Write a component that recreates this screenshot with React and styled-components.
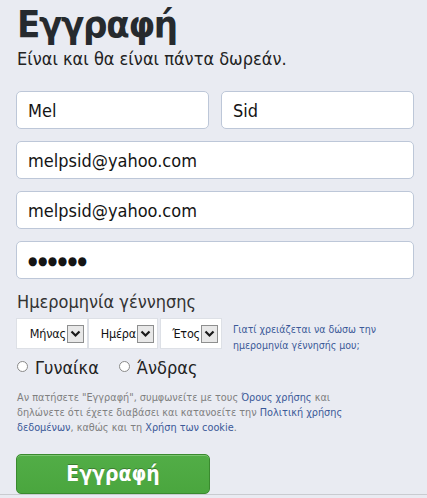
import React from 'react'
import styled, { createGlobalStyle } from 'styled-components'

const GlobalStyle = createGlobalStyle`
    html, body {
        margin: 0;
        padding: 0;
        background: #e9ebf2;
    }
    body {
        font-family: "DejaVu Sans", Verdana, sans-serif;
        color: #333;
    }
`

const Page = styled.div`
    width: 427px;
    height: 495px;
    box-sizing: border-box;
    padding: 0 13px 0 16px;
    background: #e9ebf2;
    border-bottom: 1px solid #c9cbd0;
    overflow: hidden;
`

const Title = styled.h1`
    margin: 0;
    padding: 2px 0 0 1px;
    font-family: "DejaVu Sans Condensed", "DejaVu Sans", sans-serif;
    font-size: 38px;
    line-height: 44px;
    font-weight: bold;
    color: #262a2e;
    letter-spacing: -1.3px;
`

const Subtitle = styled.p`
    margin: 2px 0 0 1px;
    font-family: "DejaVu Sans Condensed", "DejaVu Sans", sans-serif;
    font-size: 18px;
    line-height: 22px;
    color: #222;
`

const Fields = styled.div`
    display: flex;
    flex-direction: column;
    gap: 12px;
    margin-top: 21px;
    width: 398px;
`

const Row = styled.div`
    display: flex;
    gap: 12px;
`

const Input = styled.div`
    height: 38px;
    flex: none;
    box-sizing: border-box;
    border: 1px solid #bdc7d8;
    border-radius: 5px;
    background: #fff;
    display: flex;
    align-items: center;
    padding: 0 11px;
    font-family: "DejaVu Sans Condensed", "DejaVu Sans", sans-serif;
    font-size: 18px;
    color: #141414;
`

const HalfInput = styled(Input)`
    flex: 1;
`

const Dots = styled(Input)`
    font-size: 12px;
    letter-spacing: 0.5px;
    padding-top: 2px;
`

const Label = styled.div`
    margin: 12px 0 0 1px;
    font-family: "DejaVu Sans Condensed", "DejaVu Sans", sans-serif;
    font-size: 18px;
    line-height: 22px;
    color: #333;
`

const BirthRow = styled.div`
    display: flex;
    align-items: flex-start;
    margin-top: 5px;
`

const Select = styled.div`
    width: ${p => p.$w}px;
    height: 31px;
    box-sizing: border-box;
    margin-right: ${p => p.$mr || 0}px;
    background: #fff;
    border: 1px solid #dde0e6;
    display: flex;
    align-items: center;
    justify-content: flex-end;
    padding-right: 3px;
    gap: 1px;
    font-family: "DejaVu Sans Condensed", "DejaVu Sans", sans-serif;
    font-size: 12.5px;
    letter-spacing: -0.2px;
    color: #111;
`

const Arrow = styled.span`
    width: 17px;
    height: 18px;
    flex: none;
    box-sizing: border-box;
    border: 1px solid #8e8f8f;
    background: #e8e8e8;
    display: flex;
    align-items: center;
    justify-content: center;
`

const Why = styled.a`
    margin: 3px 0 0 11px;
    font-family: "DejaVu Sans Condensed", "DejaVu Sans", sans-serif;
    font-size: 10.5px;
    line-height: 16px;
    color: #3b5998;
    text-decoration: none;
`

const Gender = styled.div`
    display: flex;
    align-items: center;
    gap: 20px;
    margin-top: 4px;
    padding-left: 1px;
`

const Option = styled.label`
    display: flex;
    align-items: center;
    gap: 7px;
    font-family: "DejaVu Sans Condensed", "DejaVu Sans", sans-serif;
    font-size: 18px;
    color: #222;
`

const Radio = styled.span`
    width: 11px;
    height: 11px;
    box-sizing: border-box;
    border: 1px solid #8a8a8a;
    border-radius: 50%;
    background: #fff;
    margin-top: -3px;
`

const Terms = styled.p`
    margin: 12px 0 0 1px;
    font-family: "DejaVu Sans Condensed", "DejaVu Sans", sans-serif;
    font-size: 10.8px;
    line-height: 15px;
    color: #7f7f7f;
    & a {
        color: #3b5998;
        text-decoration: none;
    }
`

const Button = styled.button`
    display: block;
    margin-top: 19px;
    width: 194px;
    height: 40px;
    border: 1px solid #3a8a2f;
    border-radius: 5px;
    background: linear-gradient(#52ad47, #4aa63e);
    box-shadow: inset 0 1px 0 #7cc472;
    color: #fff;
    font-family: "DejaVu Sans Condensed", "DejaVu Sans", sans-serif;
    font-size: 21px;
    font-weight: bold;
    text-shadow: 0 -1px 0 #3b7d31;
    cursor: pointer;
`

function Chevron() {
    return (
        <svg width="11" height="8" viewBox="0 0 11 8">
            <path d="M1.5 1.5 L5.5 5.5 L9.5 1.5" fill="none" stroke="#1a1a1a" strokeWidth="2.2" />
        </svg>
    )
}

function DateSelect({ label, width, mr }) {
    return (
        <Select $w={width} $mr={mr}>
            <span>{label}</span>
            <Arrow><Chevron /></Arrow>
        </Select>
    )
}

export default function App() {
    return (
        <>
            <GlobalStyle />
            <Page>
                <Title>Εγγραφή</Title>
                <Subtitle>Είναι και θα είναι πάντα δωρεάν.</Subtitle>
                <Fields>
                    <Row>
                        <HalfInput>Mel</HalfInput>
                        <HalfInput>Sid</HalfInput>
                    </Row>
                    <Input>melpsid@yahoo.com</Input>
                    <Input>melpsid@yahoo.com</Input>
                    <Dots>●●●●●●</Dots>
                </Fields>
                <Label>Ημερομηνία γέννησης</Label>
                <BirthRow>
                    <DateSelect label="Μήνας" width={72} />
                    <DateSelect label="Ημέρα" width={70} mr={2} />
                    <DateSelect label="Έτος" width={62} />
                    <Why href="#">Γιατί χρειάζεται να δώσω την<br />ημερομηνία γέννησής μου;</Why>
                </BirthRow>
                <Gender>
                    <Option><Radio />Γυναίκα</Option>
                    <Option><Radio />Άνδρας</Option>
                </Gender>
                <Terms>
                    Αν πατήσετε "Εγγραφή", συμφωνείτε με τους <a href="#">Όρους χρήσης</a> και<br />
                    δηλώνετε ότι έχετε διαβάσει και κατανοείτε την <a href="#">Πολιτική χρήσης</a><br />
                    <a href="#">δεδομένων</a>, καθώς και τη <a href="#">Χρήση των cookie</a>.
                </Terms>
                <Button>Εγγραφή</Button>
            </Page>
        </>
    )
}
